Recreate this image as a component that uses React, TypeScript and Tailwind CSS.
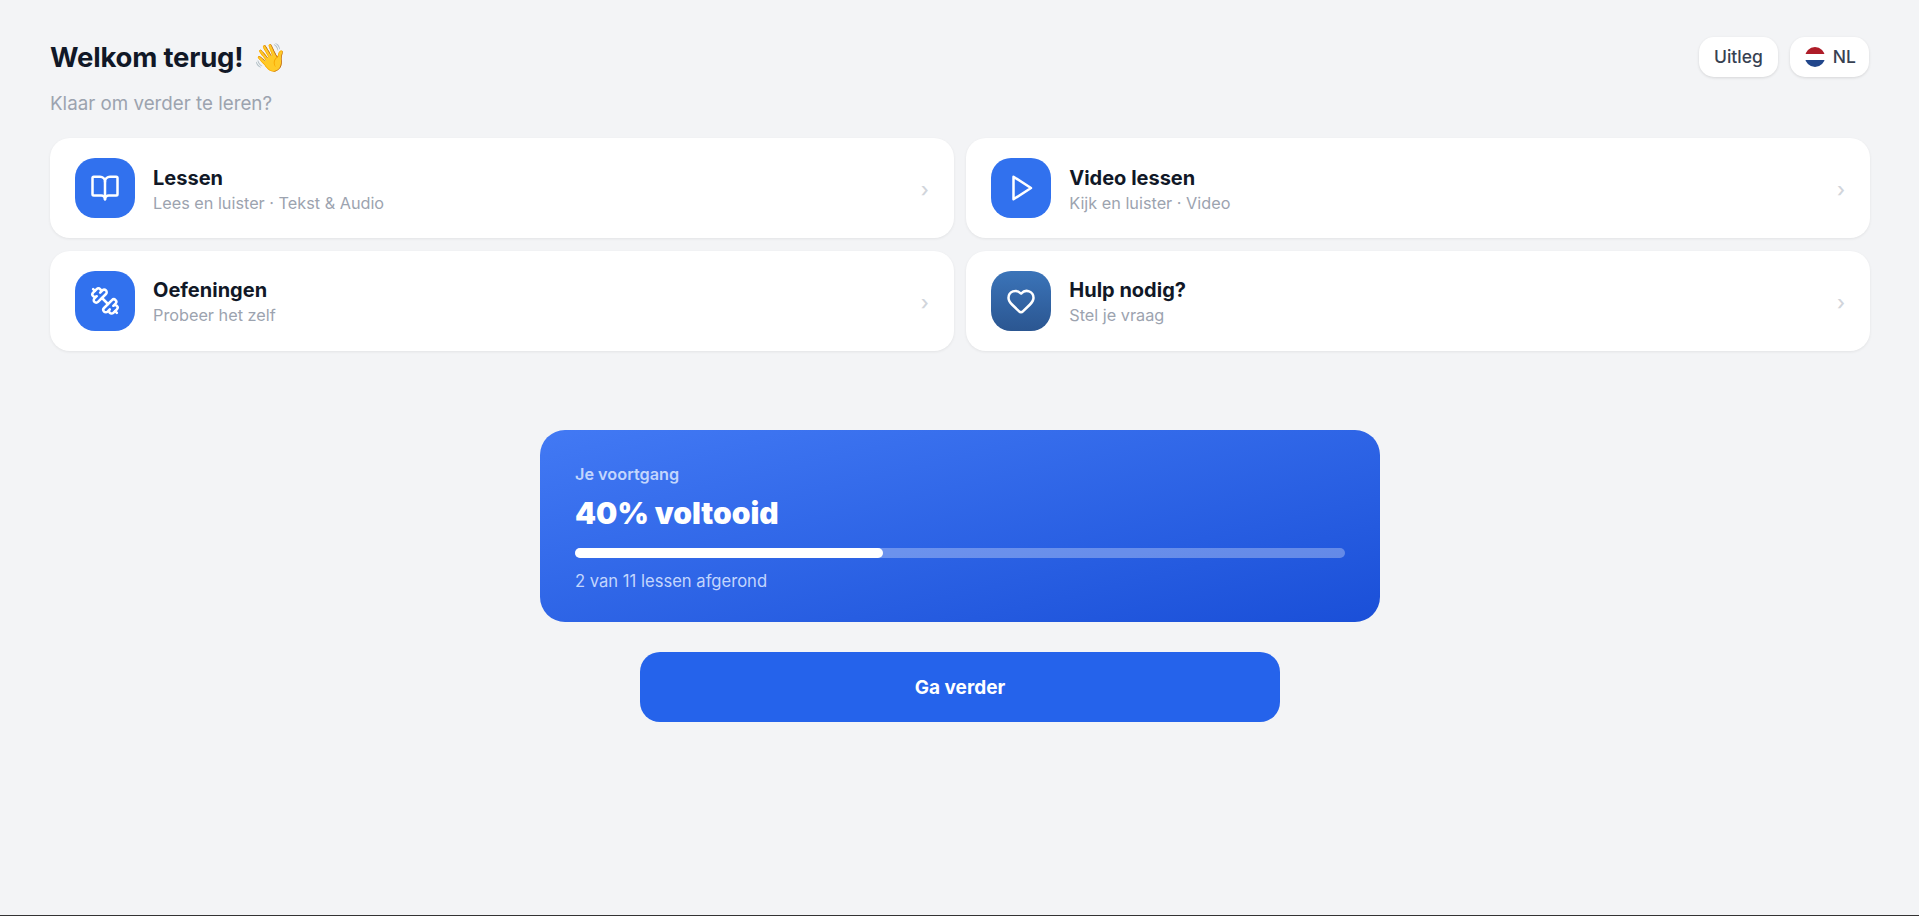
import { BookOpen, Dumbbell, Heart } from "lucide-react";

function Card({ icon, title, sub, iconClass }: { icon: React.ReactNode; title: string; sub: string; iconClass: string }) {
  return (
    <div className="flex h-[100px] items-center gap-[18px] rounded-[20px] bg-white px-[25px] shadow-[0_1px_3px_rgba(0,0,0,0.07)]">
      <div className={`flex h-[60px] w-[60px] shrink-0 items-center justify-center rounded-[20px] text-white ${iconClass}`}>{icon}</div>
      <div className="flex min-w-0 flex-1 flex-col pt-[3px]">
        <div className="text-[20px] font-bold leading-[26px] text-[#111827]">{title}</div>
        <div className="text-[16.25px] leading-[24px] text-[#9ca3af]">{sub}</div>
      </div>
      <div className="pt-[4px] text-[20px] font-medium leading-none text-[#d1d5db]">›</div>
    </div>
  );
}

export default function App() {
  return (
    <div className="flex h-[916px] flex-col border-b border-[#333333] bg-[#f3f4f6] pl-[50px] pr-[49px] font-['Inter',sans-serif]">
      <div className="flex items-start justify-between pt-[37px]">
        <div>
          <h1 className="flex items-center text-[27.5px] font-bold leading-[40px] text-[#111827]">
            <span className="tracking-[-0.2px]">Welkom terug!</span>
            <span className="ml-[10px]">👋</span>
          </h1>
          <p className="mt-[14px] text-[18.75px] leading-[26px] text-[#9ca3af]">Klaar om verder te leren?</p>
        </div>
        <div className="mr-[1px] flex items-center gap-[12px]">
          <button className="flex h-[40px] items-center rounded-[15px] bg-white px-[15px] text-[17.5px] font-medium text-[#374151] shadow-[0_1px_3px_rgba(0,0,0,0.12)]">Uitleg</button>
          <button className="flex h-[40px] items-center gap-[8px] rounded-[15px] bg-white pl-[15px] pr-[13px] text-[17.5px] font-medium text-[#374151] shadow-[0_1px_3px_rgba(0,0,0,0.12)]">
            <span className="flex h-[20px] w-[20px] flex-col overflow-hidden rounded-full">
              <span className="flex-1 bg-[#ae1c28]" />
              <span className="flex-1 bg-white" />
              <span className="flex-1 bg-[#21468b]" />
            </span>
            NL
          </button>
        </div>
      </div>

      <div className="mt-[21px] grid grid-cols-2 gap-[12.5px]">
        <Card iconClass="bg-[#3171ee]" icon={<BookOpen size={30} strokeWidth={2} />} title="Lessen" sub="Lees en luister · Tekst & Audio" />
        <Card
          iconClass="bg-[#3171ee]"
          icon={
            <svg width="30" height="30" viewBox="0 0 24 24" fill="none" stroke="currentColor" strokeWidth="2" strokeLinejoin="round" strokeLinecap="round">
              <polygon points="6 3 20 12 6 21 6 3" />
            </svg>
          }
          title="Video lessen"
          sub="Kijk en luister · Video"
        />
        <Card iconClass="bg-[#3171ee]" icon={<Dumbbell size={30} strokeWidth={2} className="-scale-x-100" />} title="Oefeningen" sub="Probeer het zelf" />
        <Card iconClass="bg-gradient-to-b from-[#3b74b9] to-[#2b5691]" icon={<Heart size={30} strokeWidth={2} />} title="Hulp nodig?" sub="Stel je vraag" />
      </div>

      <div className="mt-[79.5px] flex flex-col items-center">
        <div className="h-[192px] w-[840px] rounded-[25px] bg-gradient-to-br from-[#4279f4] to-[#1a4fd8] px-[35px] pt-[32px]">
          <div className="text-[16.25px] font-semibold leading-[24px] text-[#c3d6fd]">Je voortgang</div>
          <div className="mt-[8px] text-[30px] font-black leading-[38px] text-white">40% voltooid</div>
          <div className="mt-[16px] h-[10px] w-full rounded-full bg-white/30">
            <div className="h-full w-[40%] rounded-full bg-white" />
          </div>
          <div className="mt-[11px] text-[16.6px] leading-[24px] text-[#c3d6fd]">2 van 11 lessen afgerond</div>
        </div>
        <button className="mt-[30px] flex h-[70px] w-[640px] items-center justify-center rounded-[20px] bg-[#2563eb] pt-[3px] text-[19px] font-bold text-white">Ga verder</button>
      </div>
    </div>
  );
}
